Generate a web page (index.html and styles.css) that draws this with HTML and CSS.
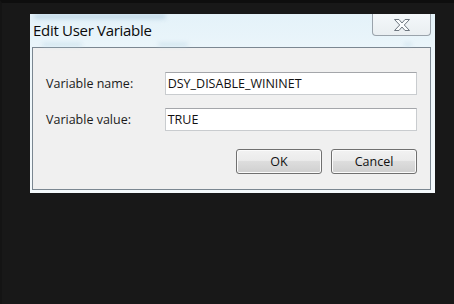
FILE: index.html
```html
<!DOCTYPE html>
<html>
<head>
<meta charset="utf-8">
<link rel="stylesheet" href="styles.css">
</head>
<body>
<div class="screen">
  <div class="dialog">
    <div class="ghost">
      <span class="blob blob-a"></span>
      <span class="blob blob-b"></span>
      <span class="blob blob-c"></span>
      <span class="blob blob-d"></span>
    </div>
    <div class="titlebar">
      <div class="title">Edit User Variable</div>
      <div class="close">
        <svg width="20" height="14" viewBox="0 0 20 14">
          <path d="M2.5 1.5 H7 L10 5 L13 1.5 H17.5 L12.3 7 L17.5 12.5 H13 L10 9 L7 12.5 H2.5 L7.7 7 Z" fill="#fbfdfe" stroke="#6e7780" stroke-width="1" stroke-linejoin="round"/>
        </svg>
      </div>
    </div>
    <div class="panel">
      <div class="row">
        <label class="label">Variable name:</label>
        <div class="field">DSY_DISABLE_WININET</div>
      </div>
      <div class="row">
        <label class="label">Variable value:</label>
        <div class="field">TRUE</div>
      </div>
      <div class="buttons">
        <div class="btn">OK</div>
        <div class="btn">Cancel</div>
      </div>
    </div>
  </div>
</div>
</body>
</html>
```
FILE: styles.css
```css
* { box-sizing: border-box; }
html, body { margin: 0; padding: 0; }
body {
  width: 454px;
  height: 304px;
  background: #181818;
  font-family: "Open Sans", "Noto Sans", sans-serif;
  overflow: hidden;
}
.screen {
  width: 454px;
  height: 304px;
  border-top: 3px solid #0e0e0e;
  border-left: 2px solid #141414;
  padding: 11px 0 0 28px;
}
.dialog {
  position: relative;
  overflow: hidden;
  width: 405px;
  height: 179px;
  background: linear-gradient(180deg, #e4f2f9 0%, #eef7fb 30%, #f4f9fc 100%);
  padding: 0 4px 3px 2px;
  display: flex;
  flex-direction: column;
}
.ghost {
  position: absolute;
  left: 0; top: 0; right: 0; height: 33px;
  filter: blur(2px);
  pointer-events: none;
}
.blob {
  position: absolute;
  display: block;
  background: #b9d3e4;
  border-radius: 2px;
}
.blob-a { left: 4px; top: 0; width: 132px; height: 5px; opacity: 0.8; }
.blob-b { left: 12px; top: 29px; width: 40px; height: 3px; opacity: 0.6; }
.blob-c { left: 128px; top: 29px; width: 30px; height: 3px; opacity: 0.6; }
.blob-d { left: 374px; top: 29px; width: 8px; height: 3px; opacity: 0.5; }
.titlebar {
  position: relative;
  height: 33px;
  display: flex;
  justify-content: space-between;
  align-items: flex-start;
}
.title {
  margin: 6px 0 0 1px;
  font-size: 15px;
  color: #0a0a0a;
  letter-spacing: -0.3px;
}
.close {
  width: 59px;
  height: 22px;
  border: 1px solid #9aa3ab;
  border-top: none;
  border-radius: 0 0 4px 4px;
  background: linear-gradient(180deg, #f4f8fa, #e9eef1);
  display: flex;
  align-items: center;
  justify-content: center;
}
.panel {
  flex: 1;
  background: #f0f0f0;
  border: 1px solid #7b8791;
  padding: 24px 13px 0 13px;
  display: flex;
  flex-direction: column;
}
.row {
  display: flex;
  align-items: center;
  height: 23px;
  margin-bottom: 13px;
}
.label {
  width: 119px;
  font-size: 12.5px;
  color: #1a1a1a;
}
.field {
  width: 253px;
  height: 23px;
  background: #fff;
  border: 1px solid #c9cccf;
  border-top-color: #a4a6aa;
  padding: 0 0 0 2px;
  font-size: 12.5px;
  line-height: 21px;
  color: #111;
}
.buttons {
  margin-top: 5px;
  display: flex;
  justify-content: flex-end;
  gap: 9px;
}
.btn {
  width: 86px;
  height: 25px;
  border: 1px solid #707070;
  border-radius: 3px;
  background: linear-gradient(180deg, #f2f2f2 0%, #ebebeb 45%, #dddddd 50%, #cfcfcf 100%);
  box-shadow: inset 0 0 0 1px #fbfbfb;
  font-size: 12.5px;
  color: #111;
  display: flex;
  align-items: center;
  justify-content: center;
}
```
